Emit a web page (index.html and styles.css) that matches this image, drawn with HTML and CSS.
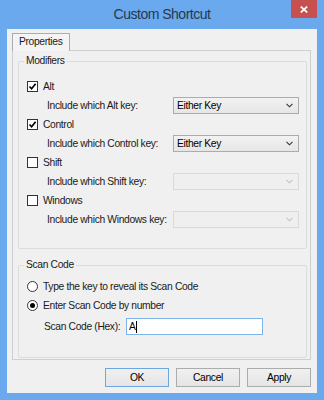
FILE: index.html
```html
<!DOCTYPE html>
<html lang="en">
<head>
  <meta charset="UTF-8" />
  <title>Custom Shortcut</title>
  <link rel="stylesheet" href="styles.css">
</head>
<body>
  <div class="window">
    <div class="titlebar">
      <span></span>
      <h1>Custom Shortcut</h1>
      <button class="close" title="Close">
        <svg width="8" height="7" viewBox="0 0 8 7"><path d="M0.8 0.6 L7.2 6.4 M7.2 0.6 L0.8 6.4" stroke="#fff" stroke-width="1.8" fill="none"/></svg>
      </button>
    </div>

    <div class="client">
      <div class="tabs">
        <div class="tab">Properties</div>
      </div>

      <div class="panel">
        <fieldset class="group modifiers">
          <legend>Modifiers</legend>

          <div class="modifier">
            <label class="check">
              <span class="box"><svg width="9" height="9" viewBox="0 0 9 9"><path d="M1.5 4.5 L3.6 6.8 L7.6 1.8" stroke="#000" stroke-width="1.7" fill="none"/></svg></span>
              Alt
            </label>
            <div class="keyrow">
              <span>Include which Alt key:</span>
              <div class="select">Either Key <svg width="7" height="5" viewBox="0 0 7 5"><path d="M0.5 0.8 L3.5 3.8 L6.5 0.8" stroke="#333" stroke-width="1.1" fill="none"/></svg></div>
            </div>
          </div>

          <div class="modifier">
            <label class="check">
              <span class="box"><svg width="9" height="9" viewBox="0 0 9 9"><path d="M1.5 4.5 L3.6 6.8 L7.6 1.8" stroke="#000" stroke-width="1.7" fill="none"/></svg></span>
              Control
            </label>
            <div class="keyrow">
              <span>Include which Control key:</span>
              <div class="select">Either Key <svg width="7" height="5" viewBox="0 0 7 5"><path d="M0.5 0.8 L3.5 3.8 L6.5 0.8" stroke="#333" stroke-width="1.1" fill="none"/></svg></div>
            </div>
          </div>

          <div class="modifier">
            <label class="check"><span class="box"></span>Shift</label>
            <div class="keyrow">
              <span>Include which Shift key:</span>
              <div class="select disabled"><svg width="7" height="5" viewBox="0 0 7 5"><path d="M0.5 0.8 L3.5 3.8 L6.5 0.8" stroke="#c2c2c2" stroke-width="1.1" fill="none"/></svg></div>
            </div>
          </div>

          <div class="modifier">
            <label class="check"><span class="box"></span>Windows</label>
            <div class="keyrow">
              <span>Include which Windows key:</span>
              <div class="select disabled"><svg width="7" height="5" viewBox="0 0 7 5"><path d="M0.5 0.8 L3.5 3.8 L6.5 0.8" stroke="#c2c2c2" stroke-width="1.1" fill="none"/></svg></div>
            </div>
          </div>
        </fieldset>

        <fieldset class="group scancode">
          <legend>Scan Code</legend>
          <label class="check"><span class="radio"></span>Type the key to reveal its Scan Code</label>
          <label class="check"><span class="radio on"></span>Enter Scan Code by number</label>
          <div class="hexrow">
            <span>Scan Code (Hex):</span>
            <div class="textbox">A<span class="caret"></span></div>
          </div>
        </fieldset>
      </div>

      <div class="buttons">
        <button class="btn default">OK</button>
        <button class="btn">Cancel</button>
        <button class="btn">Apply</button>
      </div>
    </div>
  </div>
</body>
</html>
```

FILE: styles.css
```css
body {
  margin: 0;
  font-family: "Liberation Sans", Arial, sans-serif;
  font-size: 10.3px;
  letter-spacing: -0.35px;
  color: #1a1a1a;
}

.window {
  width: 324px;
  height: 400px;
  box-sizing: border-box;
  padding: 0 7px 7px;
  background: #6ba9ee;
  display: flex;
  flex-direction: column;
}

.titlebar {
  height: 29px;
  display: grid;
  grid-template-columns: 1fr auto 1fr;
  align-items: start;
}

.titlebar h1 {
  margin: 0;
  font-size: 14px;
  font-weight: normal;
  line-height: 28px;
  letter-spacing: -0.5px;
  color: #26384d;
}

.close {
  justify-self: end;
  width: 26px;
  height: 18px;
  padding: 0;
  border: none;
  background: #c75050;
  display: flex;
  align-items: center;
  justify-content: center;
}

.client {
  flex: 1;
  background: #f0f0f0;
  padding: 4px 6px 6px 5px;
  display: flex;
  flex-direction: column;
}

.tabs {
  display: flex;
  height: 17px;
}

.tab {
  border: 1px solid #acacac;
  border-bottom: none;
  padding: 0 7px 0 6px;
  line-height: 16px;
  background: #f4f4f4;
  margin-bottom: -1px;
  position: relative;
  z-index: 1;
}

.panel {
  border: 1px solid #cfcfcf;
  padding: 3px 3px 1px 5px;
}

.group {
  margin: 0;
  min-width: 0;
  border: 1px solid #dcdcdc;
  border-radius: 2px;
  padding: 9px 8px 19px;
}

.group legend {
  padding: 0 2px;
  margin-left: -3px;
  line-height: 14px;
}

.scancode {
  margin-top: 9px;
  padding: 5px 8px 22px;
}

.modifier {
  height: 38px;
}

.check {
  height: 19px;
  display: flex;
  align-items: center;
  gap: 5px;
}

.box {
  width: 11px;
  height: 11px;
  box-sizing: border-box;
  border: 1px solid #333;
  background: #fff;
  display: flex;
  align-items: center;
  justify-content: center;
}

.radio {
  width: 11px;
  height: 11px;
  box-sizing: border-box;
  border: 1px solid #333;
  border-radius: 50%;
  background: #fff;
  display: flex;
  align-items: center;
  justify-content: center;
}

.radio.on::after {
  content: "";
  width: 5px;
  height: 5px;
  border-radius: 50%;
  background: #000;
}

.keyrow {
  display: grid;
  grid-template-columns: 126px 126px;
  align-items: center;
  height: 17px;
  margin: 1px 0 1px 20px;
}

.select {
  height: 17px;
  box-sizing: border-box;
  border: 1px solid #acacac;
  background: linear-gradient(#f2f2f2, #e6e6e6);
  padding: 0 5px 0 3px;
  display: flex;
  align-items: center;
  justify-content: space-between;
  color: #000;
}

.select.disabled {
  border-color: #d9d9d9;
  background: #efefef;
  justify-content: flex-end;
}

.hexrow {
  display: grid;
  grid-template-columns: 82px 137px;
  align-items: center;
  margin: 3px 0 0 17px;
}

.textbox {
  height: 17px;
  box-sizing: border-box;
  border: 1px solid #7eb4ea;
  background: #fff;
  padding-left: 2px;
  display: flex;
  align-items: center;
  color: #000;
}

.caret {
  width: 1px;
  height: 12px;
  background: #000;
}

.buttons {
  display: flex;
  justify-content: flex-end;
  gap: 7px;
  margin-top: 8px;
}

.btn {
  width: 64px;
  height: 19px;
  padding: 0;
  border: 1px solid #acacac;
  background: linear-gradient(#f0f0f0, #e5e5e5);
  font-family: inherit;
  font-size: inherit;
  letter-spacing: inherit;
  color: #000;
}

.btn.default {
  border-color: #6fa6de;
}
```
